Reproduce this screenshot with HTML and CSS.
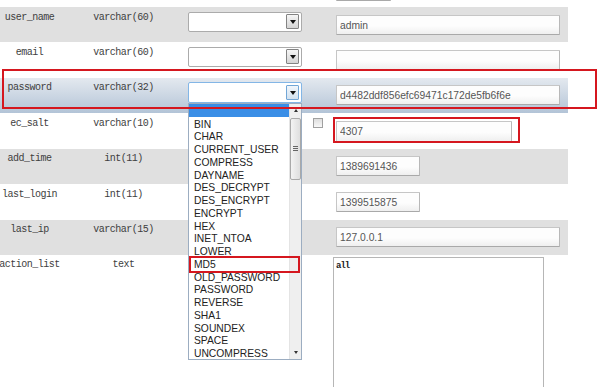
FILE: index.html
```html
<!DOCTYPE html>
<html>
<head>
<meta charset="utf-8">
<link rel="stylesheet" href="styles.css">
</head>
<body>
<div class="page">
  <div class="table">
    <div class="row">
      <div class="name"></div><div class="type"></div><div class="fn"></div><div class="null"></div>
      <div class="val"><input class="inp tiny" value=""></div>
    </div>
    <div class="row gray">
      <div class="name">user_name</div><div class="type">varchar(60)</div>
      <div class="fn"><div class="sel"><span class="btn"></span></div></div>
      <div class="null"></div>
      <div class="val"><input class="inp" value="admin"></div>
    </div>
    <div class="row">
      <div class="name">email</div><div class="type">varchar(60)</div>
      <div class="fn"><div class="sel"><span class="btn"></span></div></div>
      <div class="null"></div>
      <div class="val"><input class="inp" value=""></div>
    </div>
    <div class="row hl">
      <div class="name">password</div><div class="type">varchar(32)</div>
      <div class="fn drop">
        <div class="sel focus"><span class="btn"></span></div>
        <div class="list">
          <div class="items">
            <div class="item on">&nbsp;</div>
            <div class="item">BIN</div>
            <div class="item">CHAR</div>
            <div class="item">CURRENT_USER</div>
            <div class="item">COMPRESS</div>
            <div class="item">DAYNAME</div>
            <div class="item">DES_DECRYPT</div>
            <div class="item">DES_ENCRYPT</div>
            <div class="item">ENCRYPT</div>
            <div class="item">HEX</div>
            <div class="item">INET_NTOA</div>
            <div class="item">LOWER</div>
            <div class="item">MD5</div>
            <div class="item">OLD_PASSWORD</div>
            <div class="item">PASSWORD</div>
            <div class="item">REVERSE</div>
            <div class="item">SHA1</div>
            <div class="item">SOUNDEX</div>
            <div class="item">SPACE</div>
            <div class="item">UNCOMPRESS</div>
          </div>
          <div class="sb">
            <div class="sb-btn"><span class="up"></span></div>
            <div class="sb-track">
              <div class="thumb"><span class="grip"></span></div>
            </div>
            <div class="sb-btn"><span class="down"></span></div>
          </div>
        </div>
      </div>
      <div class="null"></div>
      <div class="val"><input class="inp" value="d4482ddf856efc69471c172de5fb6f6e"></div>
    </div>
    <div class="row">
      <div class="name">ec_salt</div><div class="type">varchar(10)</div>
      <div class="fn"></div>
      <div class="null"><span class="chk"></span></div>
      <div class="val"><input class="inp salt" value="4307"></div>
    </div>
    <div class="row gray">
      <div class="name">add_time</div><div class="type">int(11)</div>
      <div class="fn"></div><div class="null"></div>
      <div class="val"><input class="inp short" value="1389691436"></div>
    </div>
    <div class="row">
      <div class="name">last_login</div><div class="type">int(11)</div>
      <div class="fn"></div><div class="null"></div>
      <div class="val"><input class="inp short" value="1399515875"></div>
    </div>
    <div class="row gray">
      <div class="name">last_ip</div><div class="type">varchar(15)</div>
      <div class="fn"></div><div class="null"></div>
      <div class="val"><input class="inp" value="127.0.0.1"></div>
    </div>
    <div class="row tall">
      <div class="name">action_list</div><div class="type">text</div>
      <div class="fn"></div><div class="null"></div>
      <div class="val ta-cell"><textarea class="ta">all</textarea></div>
    </div>
  </div>
  <div class="mark mark-pw"></div>
  <div class="mark mark-salt"></div>
  <div class="mark mark-md5"></div>
</div>
</body>
</html>
```
FILE: styles.css
```css
html, body {
  margin: 0;
  padding: 0;
  background: #fff;
}
body {
  font-family: "Liberation Sans", Arial, sans-serif;
}
.page {
  position: relative;
  width: 600px;
  height: 387px;
  overflow: hidden;
}
.table {
  margin-top: -28.4px;
  width: 568px;
}
.row {
  display: grid;
  grid-template-columns: 59px 129px 114px 34px 232px;
  height: 35.43px;
  background: #fff;
}
.row.tall {
  height: 180px;
}
.row.gray {
  background: #e0e0e0;
}
.row.hl {
  background: linear-gradient(#e4e9ef, #b3c4d7);
}
.name, .type {
  display: flex;
  justify-content: center;
  padding-top: 4.5px;
  font-family: "Liberation Mono", monospace;
  font-size: 10px;
  letter-spacing: -0.5px;
  line-height: 12px;
  color: #3e3e3e;
  white-space: nowrap;
}
.fn {
  padding-top: 4.5px;
}
.drop {
  position: relative;
}
.sel {
  box-sizing: border-box;
  width: 114px;
  height: 20px;
  border: 1px solid #ababab;
  border-radius: 2px;
  background: #fff;
  display: flex;
  justify-content: flex-end;
  align-items: center;
  padding-right: 2px;
}
.sel.focus {
  border-color: #83b6e6;
  height: 21px;
}
.btn {
  box-sizing: border-box;
  width: 13px;
  height: 15px;
  border: 1px solid #838383;
  border-radius: 1px;
  background: linear-gradient(#f6f6f6, #d4d4d4);
  display: flex;
  align-items: center;
  justify-content: center;
}
.focus .btn {
  border-color: #72a6d6;
  background: linear-gradient(#f1f6fb, #d2e1ef);
}
.btn::after {
  content: "";
  width: 0;
  height: 0;
  border-left: 3px solid transparent;
  border-right: 3px solid transparent;
  border-top: 4px solid #111;
}
.null {
  padding-top: 5px;
}
.chk {
  display: block;
  box-sizing: border-box;
  margin-left: 11px;
  width: 10px;
  height: 10px;
  border: 1px solid #a0a0a0;
  background: linear-gradient(#dedede, #f8f8f8);
}
.val {
  padding-top: 7.5px;
}
.inp {
  display: block;
  box-sizing: border-box;
  width: 224px;
  height: 20px;
  margin: 0;
  padding: 1px 3px 0;
  border: 1px solid #c6c6c6;
  border-bottom-color: #a9a9a9;
  border-right-color: #b8b8b8;
  border-radius: 1px;
  background: linear-gradient(#fdfdfd 55%, #efefef);
  font-family: "Liberation Sans", Arial, sans-serif;
  font-size: 10.3px;
  color: #555;
  outline: none;
}
.inp.tiny {
  width: 55px;
  height: 22px;
}
.inp.short {
  width: 84px;
}
.inp.salt {
  width: 176px;
  height: 21px;
}
.ta-cell {
  padding-top: 2px;
}
.ta {
  display: block;
  box-sizing: border-box;
  margin: 0 0 0 -3px;
  width: 211px;
  height: 170px;
  border: 1px solid #b6b6b6;
  padding: 3px 2px;
  font-family: "Liberation Mono", monospace;
  font-weight: bold;
  font-size: 9px;
  letter-spacing: -1px;
  line-height: 10px;
  color: #222;
  background: #fff;
  resize: none;
  outline: none;
}
.list {
  position: absolute;
  left: 0;
  top: 25px;
  box-sizing: border-box;
  width: 114px;
  height: 257px;
  border: 1px solid #9cadc1;
  background: #fff;
  display: flex;
  z-index: 2;
}
.items {
  flex: 1;
  overflow: hidden;
}
.item {
  box-sizing: border-box;
  height: 12.75px;
  line-height: 11px;
  padding: 2px 0 0 5px;
  font-family: "Liberation Sans", Arial, sans-serif;
  font-size: 10.3px;
  color: #222;
  white-space: nowrap;
}
.item.on {
  background: #3a8ee6;
}
.sb {
  box-sizing: border-box;
  width: 12px;
  display: flex;
  flex-direction: column;
  background: #efefef;
  border-left: 1px solid #e4e4e4;
}
.sb-btn {
  height: 13px;
  display: flex;
  align-items: center;
  justify-content: center;
}
.up {
  width: 0;
  height: 0;
  border-left: 2.5px solid transparent;
  border-right: 2.5px solid transparent;
  border-bottom: 3px solid #333;
}
.down {
  width: 0;
  height: 0;
  border-left: 2.5px solid transparent;
  border-right: 2.5px solid transparent;
  border-top: 3px solid #333;
}
.sb-track {
  flex: 1;
}
.thumb {
  box-sizing: border-box;
  margin: 1px 0 0 0;
  width: 11px;
  height: 62px;
  border: 1px solid #a9a9a9;
  border-radius: 2px;
  background: linear-gradient(90deg, #f3f3f3, #dedede);
  display: flex;
  align-items: center;
  justify-content: center;
}
.grip {
  display: block;
  width: 5px;
  height: 5px;
  background: repeating-linear-gradient(#666 0 1px, transparent 1px 2px);
}
.mark {
  position: absolute;
  box-sizing: border-box;
  border: 2px solid #d5171f;
  z-index: 3;
}
.mark-pw {
  left: 2px;
  top: 69px;
  width: 595px;
  height: 40px;
}
.mark-salt {
  left: 333px;
  top: 117px;
  width: 187px;
  height: 26px;
}
.mark-md5 {
  left: 189px;
  top: 256px;
  width: 111px;
  height: 17px;
}
```
